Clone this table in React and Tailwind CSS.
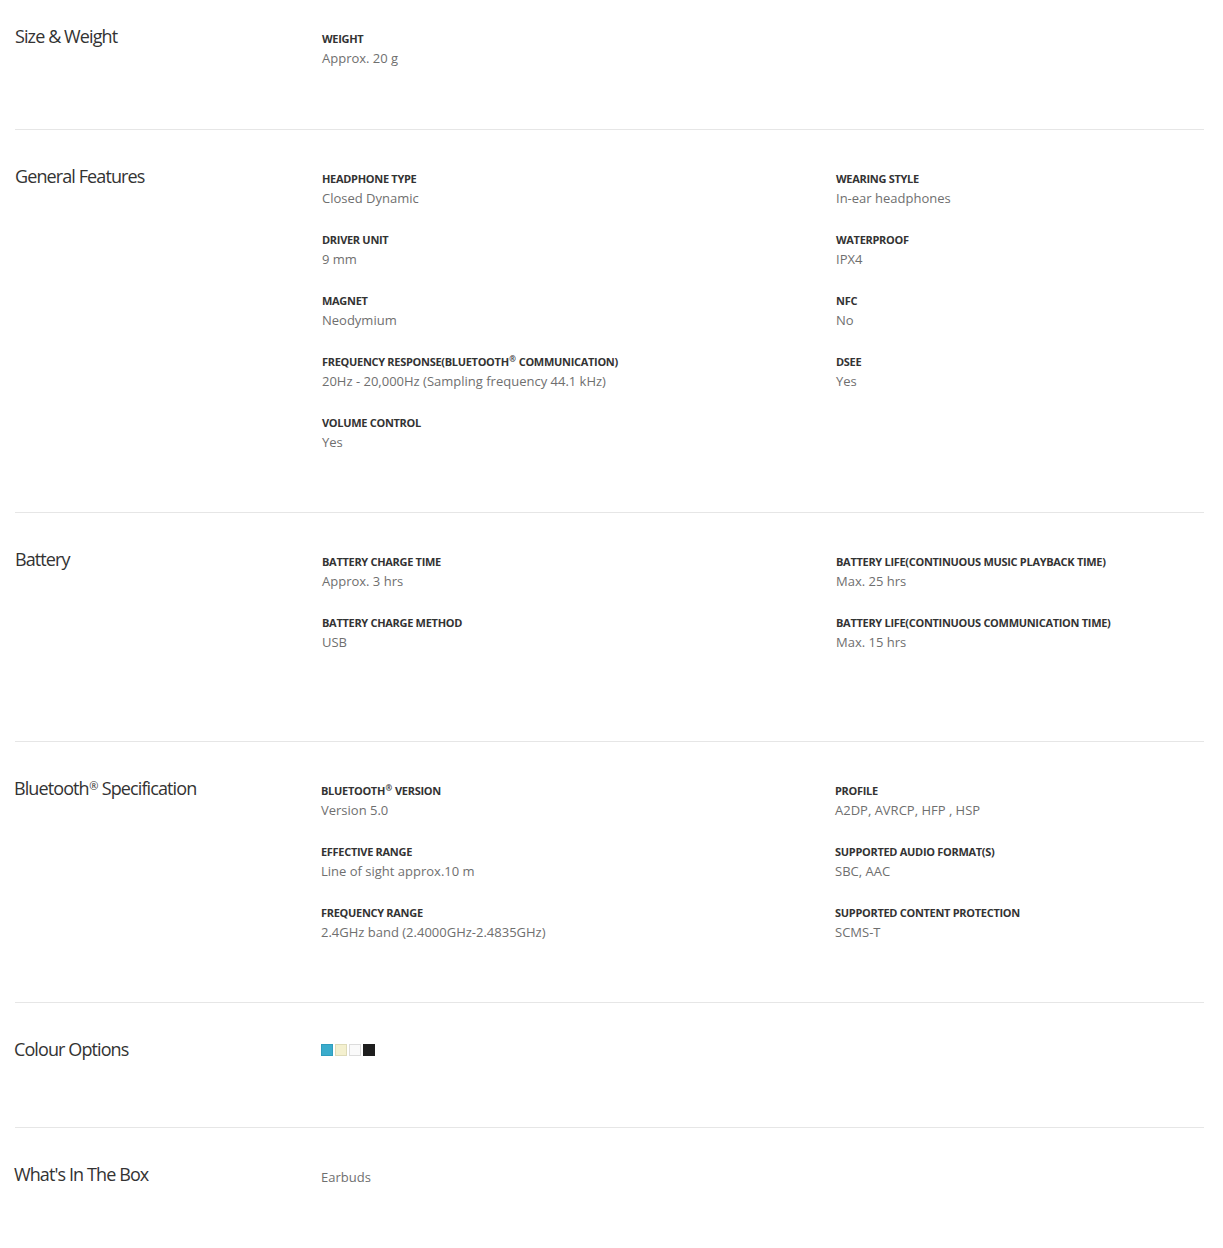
import React from 'react'

// small raised registered mark, as on the product page
const R = ({ size = 'text-[8px]' }) => (
  <span className={`${size} relative -top-[0.45em] leading-none mx-[0.5px]`}>®</span>
)

const sections = [
  {
    title: 'Size & Weight',
    left: [{ label: 'WEIGHT', value: 'Approx. 20 g' }],
    right: [],
    wrap: 'pt-[30px] pb-[61px]',
  },
  {
    title: 'General Features',
    left: [
      { label: 'HEADPHONE TYPE', value: 'Closed Dynamic' },
      { label: 'DRIVER UNIT', value: '9 mm' },
      { label: 'MAGNET', value: 'Neodymium' },
      {
        label: (
          <>
            FREQUENCY RESPONSE(BLUETOOTH
            <R /> COMMUNICATION)
          </>
        ),
        key: 'freq-resp',
        value: '20Hz - 20,000Hz (Sampling frequency 44.1 kHz)',
      },
      { label: 'VOLUME CONTROL', value: 'Yes' },
    ],
    right: [
      { label: 'WEARING STYLE', value: 'In-ear headphones' },
      { label: 'WATERPROOF', value: 'IPX4' },
      { label: 'NFC', value: 'No' },
      { label: 'DSEE', value: 'Yes' },
    ],
    wrap: 'pt-10 pb-[60px]',
  },
  {
    title: 'Battery',
    left: [
      { label: 'BATTERY CHARGE TIME', value: 'Approx. 3 hrs' },
      { label: 'BATTERY CHARGE METHOD', value: 'USB' },
    ],
    right: [
      { label: 'BATTERY LIFE(CONTINUOUS MUSIC PLAYBACK TIME)', value: 'Max. 25 hrs' },
      { label: 'BATTERY LIFE(CONTINUOUS COMMUNICATION TIME)', value: 'Max. 15 hrs' },
    ],
    wrap: 'pt-10 pb-[89px]',
  },
  {
    title: (
      <>
        Bluetooth
        <R size="text-[11px]" /> Specification
      </>
    ),
    key: 'bt',
    left: [
      {
        label: (
          <>
            BLUETOOTH
            <R /> VERSION
          </>
        ),
        key: 'bt-version',
        value: 'Version 5.0',
      },
      { label: 'EFFECTIVE RANGE', value: 'Line of sight approx.10 m' },
      { label: 'FREQUENCY RANGE', value: '2.4GHz band (2.4000GHz-2.4835GHz)' },
    ],
    right: [
      { label: 'PROFILE', value: 'A2DP, AVRCP, HFP , HSP' },
      { label: 'SUPPORTED AUDIO FORMAT(S)', value: 'SBC, AAC' },
      { label: 'SUPPORTED CONTENT PROTECTION', value: 'SCMS-T' },
    ],
    wrap: 'pt-10 pb-[60px]',
    shift: true,
  },
]

const swatches = [
  'bg-[#3aaccc] border-[#2f9dbd]',
  'bg-[#f4f0cf] border-[#dedbb8]',
  'bg-[#fafafa] border-[#dcdcdc]',
  'bg-[#1e1e1e] border-[#1e1e1e]',
]

function Spec({ label, value }) {
  return (
    <div className="h-[38px]">
      <div className="text-[11px] leading-[18px] font-bold text-[#333] tracking-[-0.3px]">{label}</div>
      <div className="text-[13px] leading-[20px] text-[#6f6f6f]">{value}</div>
    </div>
  )
}

function Title({ children }) {
  return (
    <h2 className="w-[307px] shrink-0 text-[18px] leading-[22px] font-normal text-[#333] tracking-[-0.9px] -mt-[5px]">
      {children}
    </h2>
  )
}

function Section({ s }) {
  return (
    <div className={`flex ${s.wrap} ${s.shift ? '-ml-px' : ''}`}>
      <Title>{s.title}</Title>
      <div className="w-[514px] shrink-0 flex flex-col gap-[23px]">
        {s.left.map((it) => (
          <Spec key={it.key || it.label} {...it} />
        ))}
      </div>
      <div className="flex-1 flex flex-col gap-[23px]">
        {s.right.map((it) => (
          <Spec key={it.key || it.label} {...it} />
        ))}
      </div>
    </div>
  )
}

export default function App() {
  return (
    <div className="min-h-screen bg-white font-['Open_Sans',sans-serif] pl-[15px] pr-[19px] overflow-hidden h-[1248px]">
      {sections.map((s, i) => (
        <div key={s.key || s.title}>
          {i > 0 && <div className="border-t border-[#e6e6e6]" />}
          <Section s={s} />
        </div>
      ))}

      <div className="border-t border-[#e6e6e6]" />
      {/* Colour Options */}
      <div className="flex -ml-px pt-10 h-[124px]">
        <Title>Colour Options</Title>
        <div className="flex gap-[2px] pt-[1px]">
          {swatches.map((c) => (
            <span key={c} className={`block w-3 h-3 border ${c}`} />
          ))}
        </div>
      </div>

      <div className="border-t border-[#e6e6e6]" />
      {/* What's In The Box */}
      <div className="flex -ml-px pt-10">
        <Title>What's In The Box</Title>
        <div className="text-[13px] leading-[20px] text-[#6f6f6f] -mt-px">Earbuds</div>
      </div>
    </div>
  )
}
